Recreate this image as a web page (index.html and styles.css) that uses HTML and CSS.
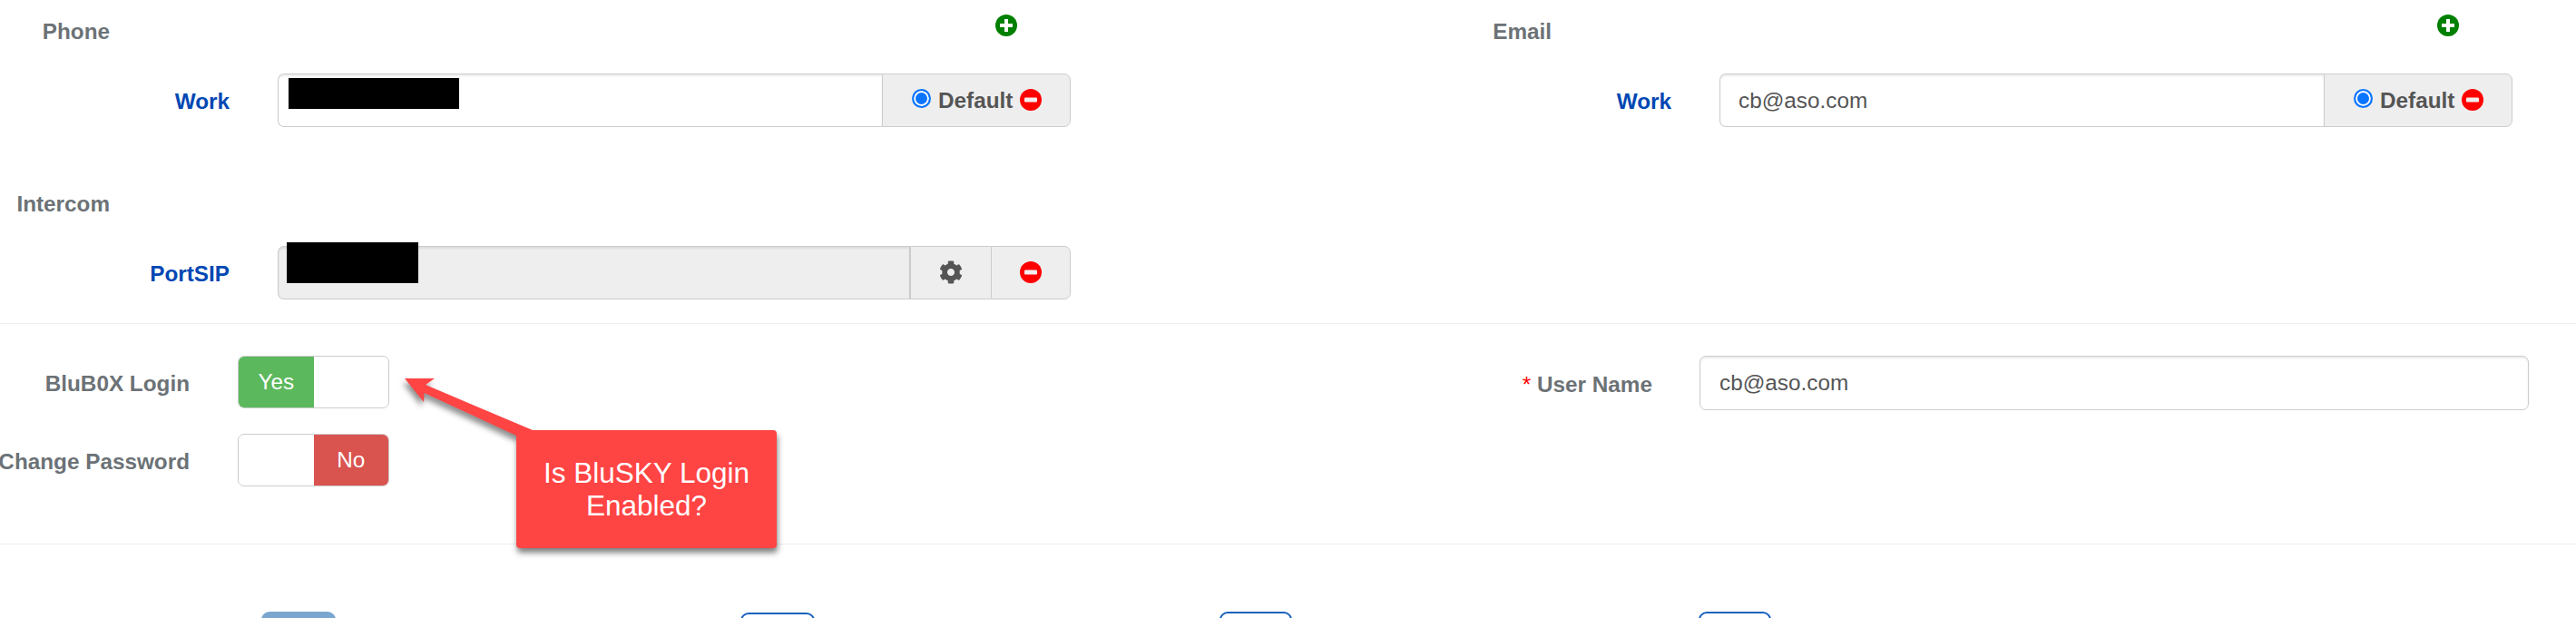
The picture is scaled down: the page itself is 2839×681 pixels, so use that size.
FILE: index.html
```html
<!DOCTYPE html>
<html lang="en">
<head>
<meta charset="utf-8">
<title>Contact details</title>
<link rel="stylesheet" href="styles.css">
</head>
<body>
<main class="page">
  <section class="contact">
    <div class="contact-col">
      <div class="block-head">
        <span class="head-label">Phone</span>
        <svg class="icon icon-add" viewBox="0 0 24 24"><circle cx="12" cy="12" r="12" fill="#008000"/><path d="M10 5h4v5h5v4h-5v5h-4v-5H5v-4h5z" fill="#fff"/></svg>
      </div>
      <div class="field-row">
        <span class="row-label">Work</span>
        <div class="input-group">
          <input class="text-input" type="text" value="" readonly>
          <div class="addon addon-default">
            <input class="radio" type="radio" checked name="phone-default">
            <span class="addon-text">Default</span>
            <svg class="icon" viewBox="0 0 24 24"><circle cx="12" cy="12" r="12" fill="#f00"/><rect x="5" y="9.5" width="14" height="5" rx="1" fill="#f4eeee"/></svg>
          </div>
          <span class="redact redact-phone"></span>
        </div>
      </div>
      <div class="block-head block-head-next">
        <span class="head-label">Intercom</span>
      </div>
      <div class="field-row">
        <span class="row-label">PortSIP</span>
        <div class="input-group">
          <input class="text-input text-input-locked" type="text" value="" readonly>
          <div class="addon addon-gear">
            <svg class="icon icon-gear" viewBox="0 0 512 512"><path fill="#555" d="M487.4 315.7l-42.6-24.6c4.3-23.2 4.3-47 0-70.2l42.6-24.6c4.9-2.8 7.1-8.6 5.5-14-11.1-35.6-30-67.8-54.7-94.6-3.8-4.1-10-5.1-14.8-2.3L380.8 110c-17.9-15.4-38.5-27.3-60.8-35.1V25.8c0-5.6-3.9-10.5-9.4-11.7-36.7-8.2-74.3-7.8-109.2 0-5.5 1.2-9.4 6.1-9.4 11.7V75c-22.2 7.9-42.8 19.8-60.8 35.1L88.7 85.5c-4.9-2.8-11-1.9-14.8 2.3-24.7 26.7-43.6 58.9-54.7 94.6-1.7 5.4.6 11.2 5.5 14L67.3 221c-4.3 23.2-4.3 47 0 70.2l-42.6 24.6c-4.9 2.8-7.1 8.6-5.5 14 11.1 35.6 30 67.8 54.7 94.6 3.8 4.1 10 5.1 14.8 2.3l42.6-24.6c17.9 15.4 38.5 27.3 60.8 35.1v49.2c0 5.6 3.9 10.5 9.4 11.7 36.7 8.2 74.3 7.8 109.2 0 5.5-1.2 9.4-6.1 9.4-11.7v-49.2c22.2-7.9 42.8-19.8 60.8-35.1l42.6 24.6c4.9 2.8 11 1.9 14.8-2.3 24.7-26.7 43.6-58.9 54.7-94.6 1.5-5.5-.7-11.3-5.6-14.1zM256 336c-44.1 0-80-35.9-80-80s35.9-80 80-80 80 35.9 80 80-35.9 80-80 80z"/></svg>
          </div>
          <div class="addon addon-remove">
            <svg class="icon" viewBox="0 0 24 24"><circle cx="12" cy="12" r="12" fill="#f00"/><rect x="5" y="9.5" width="14" height="5" rx="1" fill="#f4eeee"/></svg>
          </div>
          <span class="redact redact-intercom"></span>
        </div>
      </div>
    </div>
    <div class="contact-col">
      <div class="block-head">
        <span class="head-label">Email</span>
        <svg class="icon icon-add" viewBox="0 0 24 24"><circle cx="12" cy="12" r="12" fill="#008000"/><path d="M10 5h4v5h5v4h-5v5h-4v-5H5v-4h5z" fill="#fff"/></svg>
      </div>
      <div class="field-row">
        <span class="row-label">Work</span>
        <div class="input-group">
          <input class="text-input" type="text" value="cb@aso.com" readonly>
          <div class="addon addon-default">
            <input class="radio" type="radio" checked name="email-default">
            <span class="addon-text">Default</span>
            <svg class="icon" viewBox="0 0 24 24"><circle cx="12" cy="12" r="12" fill="#f00"/><rect x="5" y="9.5" width="14" height="5" rx="1" fill="#f4eeee"/></svg>
          </div>
        </div>
      </div>
    </div>
  </section>

  <section class="login">
    <div class="login-col">
      <div class="toggle-row">
        <span class="toggle-label">BluB0X Login</span>
        <div class="toggle">
          <span class="toggle-part toggle-yes">Yes</span>
          <span class="toggle-part"></span>
        </div>
      </div>
      <div class="toggle-row">
        <span class="toggle-label">Change Password</span>
        <div class="toggle">
          <span class="toggle-part"></span>
          <span class="toggle-part toggle-no">No</span>
        </div>
      </div>
    </div>
    <div class="login-col user-row">
      <label class="user-label"><span class="required">*</span> User Name</label>
      <input class="text-input user-input" type="text" value="cb@aso.com" readonly>
    </div>
  </section>

  <section class="actions">
    <span class="action action-filled"></span>
    <span class="action action-outline action-low"></span>
    <span class="action action-outline action-narrow"></span>
    <span class="action action-outline action-narrow"></span>
  </section>

  <svg class="arrow" viewBox="0 0 170 90" width="170" height="90">
    <path d="M6 7 L39 7 L29 14 L147 64 L129 70 L27.500 23 L27 33 Z" fill="#ff4444"/>
  </svg>
  <div class="callout">Is BluSKY Login Enabled?</div>
</main>
</body>
</html>
```
FILE: styles.css
```css
* { box-sizing: border-box; }
html, body { margin: 0; padding: 0; background: #fff; }
body {
  width: 2839px;
  height: 681px;
  overflow: hidden;
  font-family: "Liberation Sans", Arial, sans-serif;
  font-size: 24.3px;
}
.page { position: relative; height: 681px; overflow: hidden; }

.contact { display: grid; grid-template-columns: 1589px 1fr; height: 356px; }
.contact-col { display: flex; flex-direction: column; }

.block-head { display: flex; height: 81px; }
.block-head-next { margin-top: 50px; }
.head-label {
  width: 121px;
  height: 70px;
  line-height: 70px;
  text-align: right;
  font-weight: 700;
  color: #6c7276;
}
.icon { width: 24px; height: 24px; display: block; flex: none; }
.icon-add { margin: 16px 0 0 976px; }
.icon-gear { width: 26px; height: 26px; }

.field-row { display: flex; align-items: stretch; height: 59px; }
.row-label {
  width: 253px;
  margin-right: 53px;
  text-align: right;
  line-height: 62px;
  font-weight: 700;
  color: #0047b3;
}
.input-group { position: relative; display: flex; width: 874px; height: 59px; }
.text-input {
  flex: 1;
  min-width: 0;
  height: 100%;
  padding: 0 20px;
  border: 1px solid #ccc;
  border-right: 0;
  border-radius: 7px 0 0 7px;
  background: #fff;
  box-shadow: inset 0 2px 2px rgba(0, 0, 0, .075);
  font: 24.3px "Liberation Sans", Arial, sans-serif;
  color: #555;
  outline: none;
}
.text-input-locked { background: #eee; }
.addon {
  display: flex;
  align-items: center;
  flex: none;
  border: 1px solid #ccc;
  background: #eee;
  color: #555;
}
.addon:last-of-type { border-radius: 0 7px 7px 0; }
.addon-default { width: 208px; padding: 0 0 2px 32px; }
.radio {
  appearance: none;
  width: 21px;
  height: 21px;
  margin: 0 8px 2px 0;
  flex: none;
  border: 2px solid #0a75ff;
  border-radius: 50%;
  background: #0a75ff;
  box-shadow: inset 0 0 0 2px #fff;
}
.addon-text { font-weight: 700; margin-right: 8px; line-height: 1; padding-top: 3px; }
.addon-gear { width: 90px; justify-content: center; border-left-width: 2px; border-right: 0; padding-bottom: 2px; }
.addon-remove { width: 88px; justify-content: center; padding-bottom: 2px; }
.redact { position: absolute; background: #000; display: block; }
.redact-phone { left: 12px; top: 5px; width: 188px; height: 34px; }
.redact-intercom { left: 10px; top: -4px; width: 145px; height: 45px; }

.login {
  display: grid;
  grid-template-columns: 1589px 1fr;
  height: 244px;
  padding-top: 35px;
  border-top: 1px solid #eee;
  border-bottom: 1px solid #eee;
}
.login-col { display: flex; flex-direction: column; gap: 28px; }
.toggle-row { display: flex; height: 58px; }
.toggle-label {
  flex: none;
  display: flex;
  justify-content: flex-end;
  width: 209px;
  margin-right: 53px;
  white-space: nowrap;
  line-height: 62px;
  font-weight: 700;
  color: #6c7276;
}
.toggle {
  display: grid;
  grid-template-columns: 1fr 1fr;
  width: 167px;
  height: 58px;
  border: 1px solid #ccc;
  border-radius: 7px;
  overflow: hidden;
  color: #fff;
}
.toggle-part { text-align: center; line-height: 56px; }
.toggle-yes { background: #5cb85c; }
.toggle-no { background: #d9534f; }

.user-row { flex-direction: row; gap: 52px; height: 60px; }
.user-label {
  width: 232px;
  text-align: right;
  line-height: 64px;
  font-weight: 700;
  color: #6c7276;
  white-space: nowrap;
}
.required { color: #f00; font-weight: 400; }
.user-input { flex: none; width: 914px; border: 1px solid #ccc; border-radius: 7px; padding: 0 21px; }

.actions {
  display: grid;
  grid-template-columns: repeat(4, 528px);
  padding: 74px 0 0 288px;
}
.action { display: block; width: 82px; height: 60px; border-radius: 9px; }
.action-filled { background: #7ba6d0; }
.action-outline { border: 2px solid #1a62bd; background: #fff; }
.action-low { margin-top: 1px; }
.action-narrow { width: 80px; }

.arrow {
  position: absolute;
  left: 440px;
  top: 410px;
  filter: drop-shadow(-2px 5px 3px rgba(0, 0, 0, .45));
}
.callout {
  position: absolute;
  left: 569px;
  top: 474px;
  width: 287px;
  height: 130px;
  display: flex;
  align-items: center;
  justify-content: center;
  padding: 0 24px;
  border-radius: 4px;
  background: #ff4444;
  box-shadow: 1px 5px 6px rgba(0, 0, 0, .5);
  color: #fff;
  font-size: 31.5px;
  line-height: 36px;
  text-align: center;
}
```
